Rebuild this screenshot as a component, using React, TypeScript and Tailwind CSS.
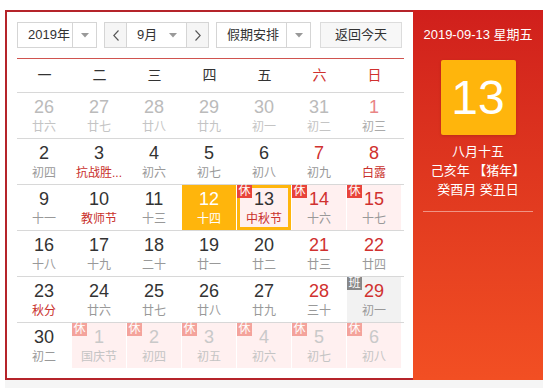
import React from "react";

type Day = {
  d: number;
  l: string;
  other?: boolean;
  wk?: boolean;
  fest?: boolean;
  today?: boolean;
  sel?: boolean;
  rest?: boolean;
  work?: boolean;
};

const rows: Day[][] = [
  [
    { d: 26, l: "廿六", other: true },
    { d: 27, l: "廿七", other: true },
    { d: 28, l: "廿八", other: true },
    { d: 29, l: "廿九", other: true },
    { d: 30, l: "初一", other: true },
    { d: 31, l: "初二", other: true },
    { d: 1, l: "初三", wk: true },
  ],
  [
    { d: 2, l: "初四" },
    { d: 3, l: "抗战胜...", fest: true },
    { d: 4, l: "初六" },
    { d: 5, l: "初七" },
    { d: 6, l: "初八" },
    { d: 7, l: "初九", wk: true },
    { d: 8, l: "白露", wk: true, fest: true },
  ],
  [
    { d: 9, l: "十一" },
    { d: 10, l: "教师节", fest: true },
    { d: 11, l: "十三" },
    { d: 12, l: "十四", today: true },
    { d: 13, l: "中秋节", sel: true, rest: true, fest: true },
    { d: 14, l: "十六", wk: true, rest: true },
    { d: 15, l: "十七", wk: true, rest: true },
  ],
  [
    { d: 16, l: "十八" },
    { d: 17, l: "十九" },
    { d: 18, l: "二十" },
    { d: 19, l: "廿一" },
    { d: 20, l: "廿二" },
    { d: 21, l: "廿三", wk: true },
    { d: 22, l: "廿四", wk: true },
  ],
  [
    { d: 23, l: "秋分", fest: true },
    { d: 24, l: "廿六" },
    { d: 25, l: "廿七" },
    { d: 26, l: "廿八" },
    { d: 27, l: "廿九" },
    { d: 28, l: "三十", wk: true },
    { d: 29, l: "初一", wk: true, work: true },
  ],
  [
    { d: 30, l: "初二" },
    { d: 1, l: "国庆节", other: true, rest: true },
    { d: 2, l: "初四", other: true, rest: true },
    { d: 3, l: "初五", other: true, rest: true },
    { d: 4, l: "初六", other: true, rest: true },
    { d: 5, l: "初七", other: true, rest: true },
    { d: 6, l: "初八", other: true, rest: true },
  ],
];

const weekdays = ["一", "二", "三", "四", "五", "六", "日"];

const Caret = () => (
  <svg width="8" height="5" viewBox="0 0 8 5">
    <path d="M0 0 L8 0 L4 4.5 Z" fill="#999" />
  </svg>
);

const Chevron = ({ dir }: { dir: "l" | "r" }) => (
  <svg width="6" height="11" viewBox="0 0 6 11">
    <path
      d={dir === "l" ? "M5.5 0.5 L0.8 5.5 L5.5 10.5" : "M0.5 0.5 L5.2 5.5 L0.5 10.5"}
      fill="none"
      stroke="#555"
      strokeWidth="1.1"
    />
  </svg>
);

function Cell({ day }: { day: Day }) {
  let bg = "bg-white";
  if (day.today) bg = "bg-[#ffb50c]";
  else if (day.rest) bg = "bg-[#fff0f0]";
  else if (day.work) bg = "bg-[#f2f2f2]";

  let numColor = "text-[#333]";
  if (day.today) numColor = "text-white";
  else if (day.other && day.rest) numColor = "text-[#c9c9c9]";
  else if (day.other) numColor = "text-[#bbb]";
  else if (day.wk && day.d === 1) numColor = "text-[#e98585]";
  else if (day.wk) numColor = "text-[#d0312f]";

  let lunarColor = "text-[#999]";
  if (day.today) lunarColor = "text-white";
  else if (day.other) lunarColor = "text-[#c4c4c4]";
  else if (day.wk && day.d === 1) lunarColor = "text-[#aaa]";
  else if (day.fest) lunarColor = "text-[#c9302c]";

  return (
    <div className={`relative w-[54px] h-[45px] mr-[1px] flex flex-col items-center pt-[3px] ${bg}`}>
      {day.sel && <div className="absolute inset-0 border-[3px] border-[#ffb50c]" />}
      {(day.rest || day.work) && (
        <div
          className={`absolute top-0 left-0 w-[15px] h-[13px] text-[12px] leading-[13px] text-white text-center ${
            day.work ? "bg-[#888]" : day.other ? "bg-[#f4a39c]" : "bg-[#e8433b]"
          }`}
        >
          {day.work ? "班" : "休"}
        </div>
      )}
      <div className={`text-[18px] leading-[22px] ${numColor}`}>{day.d}</div>
      <div className={`text-[12px] leading-[16px] mt-[1px] whitespace-nowrap ${lunarColor}`}>{day.l}</div>
    </div>
  );
}

export default function App() {
  return (
    <div
      className="w-[551px] h-[388px] bg-white overflow-hidden"
      style={{ fontFamily: '"Liberation Sans", "Noto Sans CJK SC", sans-serif' }}
    >
      <div className="ml-[5px] mt-[10px] w-[538px] flex">
        {/* left calendar */}
        <div className="w-[408px] h-[370px] border-2 border-r-0 border-[#b5242a] pl-[10px] pr-[9px] pt-[10px]">
          <div className="flex items-center h-[26px] text-[13px] text-[#333]">
            <div className="flex h-[26px] w-[80px] border border-[#d5d5d5] bg-white">
              <div className="flex-1 flex items-center pl-[10px]">2019年</div>
              <div className="w-[24px] border-l border-[#d5d5d5] flex items-center justify-center">
                <Caret />
              </div>
            </div>
            <div className="flex h-[26px] w-[105px] ml-[7px] border border-[#d5d5d5] bg-white">
              <div className="w-[22px] bg-[#f5f5f5] border-r border-[#d5d5d5] flex items-center justify-center">
                <Chevron dir="l" />
              </div>
              <div className="flex-1 flex items-center justify-between pl-[10px] pr-[9px]">
                <span>9月</span>
                <Caret />
              </div>
              <div className="w-[22px] bg-[#f5f5f5] border-l border-[#d5d5d5] flex items-center justify-center">
                <Chevron dir="r" />
              </div>
            </div>
            <div className="flex h-[26px] w-[95px] ml-[7px] border border-[#d5d5d5] bg-white">
              <div className="flex-1 flex items-center pl-[10px]">假期安排</div>
              <div className="w-[24px] border-l border-[#d5d5d5] flex items-center justify-center">
                <Caret />
              </div>
            </div>
            <div className="h-[26px] w-[82px] ml-[9px] border border-[#dcdcdc] bg-[#f7f7f7] flex items-center justify-center">
              返回今天
            </div>
          </div>

          <div className="mt-[10px] border-t border-[#d0534f]">
            <div className="flex h-[34px] items-center border-b border-[#d8d8d8] text-[14px]">
              {weekdays.map((w, i) => (
                <div key={w} className={`w-[55px] text-center ${i >= 5 ? "text-[#d0312f]" : "text-[#333]"}`}>
                  {w}
                </div>
              ))}
            </div>
            {rows.map((r, ri) => (
              <div key={ri} className={`flex ${ri < rows.length - 1 ? "border-b border-[#d8d8d8]" : ""}`}>
                {r.map((day, di) => (
                  <Cell key={di} day={day} />
                ))}
              </div>
            ))}
          </div>
        </div>

        {/* right panel */}
        <div className="w-[130px] h-[370px] bg-gradient-to-b from-[#d01f1c] to-[#f24f23] flex flex-col items-center text-white">
          <div className="mt-[16px] text-[13px] leading-[18px]">2019-09-13 星期五</div>
          <div className="mt-[16px] w-[75px] h-[75px] bg-[#ffb50c] rounded-[2px] flex items-center justify-center text-[48px] leading-none shadow-[0_1px_3px_rgba(0,0,0,0.15)]">
            13
          </div>
          <div className="mt-[7px] text-[13px] leading-[19px] text-center">
            <div>八月十五</div>
            <div>己亥年 【猪年】</div>
            <div>癸酉月 癸丑日</div>
          </div>
          <div className="mt-[12px] w-[110px] h-px bg-[rgba(255,255,255,0.45)]" />
        </div>
      </div>
      <div className="ml-[5px] w-[538px] h-[8px] bg-[#f5f5f5]" />
    </div>
  );
}
